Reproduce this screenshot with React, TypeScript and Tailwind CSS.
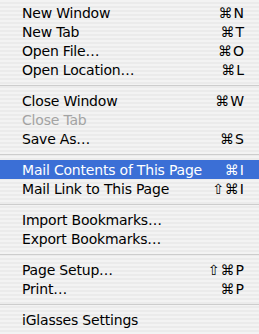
type Item = { label: string; keys?: string; disabled?: boolean; active?: boolean };

const groups: Item[][] = [
  [
    { label: "New Window", keys: "⌘N" },
    { label: "New Tab", keys: "⌘T" },
    { label: "Open File…", keys: "⌘O" },
    { label: "Open Location…", keys: "⌘L" },
  ],
  [
    { label: "Close Window", keys: "⌘W" },
    { label: "Close Tab", disabled: true },
    { label: "Save As…", keys: "⌘S" },
  ],
  [
    { label: "Mail Contents of This Page", keys: "⌘I", active: true },
    { label: "Mail Link to This Page", keys: "⇧⌘I" },
  ],
  [
    { label: "Import Bookmarks…" },
    { label: "Export Bookmarks…" },
  ],
  [
    { label: "Page Setup…", keys: "⇧⌘P" },
    { label: "Print…", keys: "⌘P" },
  ],
  [{ label: "iGlasses Settings" }],
];

function MenuRow({ item }: { item: Item }) {
  return (
    <div
      className={
        "flex h-[19px] items-center justify-between pl-[22px] pr-[14px] " +
        (item.active
          ? "bg-[#3b6fd6] text-white"
          : item.disabled
            ? "text-[#a3a3a3]"
            : "text-black")
      }
    >
      <span className="tracking-[-0.2px]">{item.label}</span>
      {item.keys ? <span className="tracking-[1px]">{item.keys}</span> : null}
    </div>
  );
}

export default function App() {
  return (
    <div className="h-[334px] w-[259px] overflow-hidden bg-[repeating-linear-gradient(to_bottom,#f3f3f3_0px,#f3f3f3_2px,#ebebeb_2px,#ebebeb_4px)] pt-[3px] font-['DejaVu_Sans',sans-serif] text-[14px] leading-none">
      {groups.map((group, gi) => (
        <div key={gi}>
          {gi > 0 ? (
            <div className="flex h-[12px] items-center">
              <div className="h-px w-full bg-[#cdcdcd]" />
            </div>
          ) : null}
          {group.map((item) => (
            <MenuRow key={item.label} item={item} />
          ))}
        </div>
      ))}
    </div>
  );
}
